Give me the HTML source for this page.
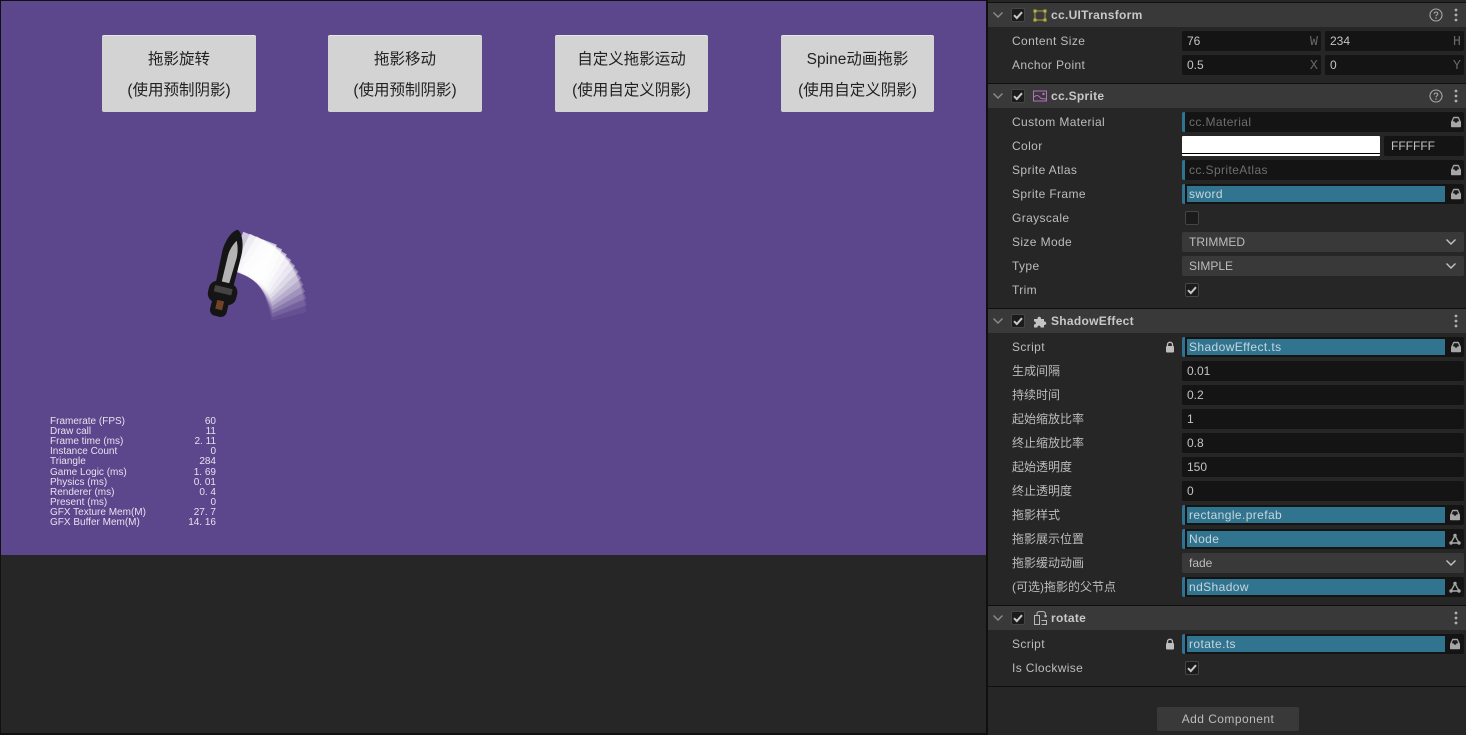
<!DOCTYPE html>
<html><head><meta charset="utf-8"><style>
html,body{margin:0;padding:0;width:1466px;height:735px;overflow:hidden;background:#262626}
body{position:relative;font-family:"Liberation Sans","Noto Sans CJK SC",sans-serif;font-size:12px;color:#bcbcbc}
div,span,svg{position:absolute;box-sizing:border-box;white-space:nowrap}
.btn{top:35px;height:77px;background:#d3d3d3;border-top:1px solid #e6e6e6;border-radius:2px;color:#222;font-size:15.5px;text-align:center}
.btn span{left:0;right:0;line-height:20px}
.btn .a{top:14px}.btn .b{top:45px}
.st{left:50px;font-size:10px;line-height:10px;color:#e6e2ee;white-space:pre}
.sv{left:150px;width:66px;text-align:right;font-size:10px;line-height:10px;color:#e6e2ee;white-space:pre}
.hd{left:988px;width:478px;height:24px;background:#393939}
.sep{left:988px;width:478px;height:1px;background:#0f0f0f}
.t{left:1051px;font-weight:bold;line-height:24px;color:#c8c8c8;font-size:12px;letter-spacing:.3px}
.l{left:1012px;line-height:20px;height:20px;color:#bcbcbc;letter-spacing:.38px}
.z{letter-spacing:0}
.i{height:20px;background:#141414;border-radius:2px;line-height:20px;padding-left:5px;color:#c4c4c4}
.k{width:20px;margin-top:2px;text-align:right;font-family:"Liberation Mono",monospace;color:#686868;line-height:20px;font-size:13.5px}
.f{left:1182px;width:282px;height:20px;background:#141414;border-radius:2px;border-left:3px solid #2f7390;line-height:20px;color:#6e6e6e;padding-left:4px;letter-spacing:.4px}
.fi{left:1187px;width:258px;height:16px;background:#317490;line-height:16px;color:#c6d6dd;padding-left:2px;letter-spacing:.4px}
.s{left:1182px;width:282px;height:20px;background:#393939;border-radius:2px;line-height:20px;padding-left:7px;color:#bcbcbc}
.c{width:14px;height:14px;background:#1b1b1b;border:1px solid #454545;border-radius:2px}
</style></head><body>
<svg width="0" height="0" style="left:0;top:0"><defs>
<symbol id="chev" viewBox="0 0 12 8"><path d="M1.5 1.5 6 6l4.500-4.500" fill="none" stroke="currentColor" stroke-width="1.400"/></symbol>
<symbol id="chk" viewBox="0 0 14 14"><path d="M3 7.200 5.800 10 11 4.200" fill="none" stroke="#c8c8c8" stroke-width="2"/></symbol>
<symbol id="help" viewBox="0 0 14 14"><circle cx="7" cy="7" r="6" fill="none" stroke="#a8a8a8" stroke-width="1.100"/><path d="M5.200 5.600C5.300 3.500 8.800 3.500 8.800 5.500 8.800 6.800 7 6.800 7 8.200" fill="none" stroke="#a8a8a8" stroke-width="1.100"/><circle cx="7" cy="10" r=".8" fill="#a8a8a8"/></symbol>
<symbol id="dots" viewBox="0 0 4 14"><circle cx="2" cy="2" r="1.400" fill="#b0b0b0"/><circle cx="2" cy="7" r="1.400" fill="#b0b0b0"/><circle cx="2" cy="12" r="1.400" fill="#b0b0b0"/></symbol>
<symbol id="box" viewBox="0 0 12 12"><path d="M1 6 3 1.500C3.300 1 3.600.8 4 .8H8C8.400.8 8.700 1 9 1.500L11 6V10.500C11 11 10.700 11.200 10.300 11.200H1.700C1.300 11.200 1 11 1 10.500Z" fill="#a6a6a6"/><path d="M2.800 5.300 4 2.300H8L9.200 5.300H7.600L7 6.600H5L4.400 5.300Z" fill="#1a1a1a"/></symbol>
<symbol id="node" viewBox="0 0 12 12"><path d="M6 2.500 2 10H10Z" fill="none" stroke="#a6a6a6" stroke-width="1.400"/><circle cx="6" cy="2.500" r="1.700" fill="#a6a6a6"/><circle cx="2" cy="10" r="1.700" fill="#a6a6a6"/><circle cx="10" cy="10" r="1.700" fill="#a6a6a6"/></symbol>
<symbol id="lock" viewBox="0 0 10 12"><path d="M2.500 5.500V3.500C2.500.6 7.500.6 7.500 3.500V5.500" fill="none" stroke="#bdbdbd" stroke-width="1.300"/><rect x="1" y="5" width="8" height="6.500" rx="1" fill="#bdbdbd"/></symbol>
</defs></svg>

<div style="left:1px;top:1px;width:985px;height:554px;background:#5c468c"></div>
<div style="left:0;top:0;width:1px;height:735px;background:#111"></div>
<div style="left:0;top:0;width:988px;height:1px;background:#111"></div>
<div style="left:986px;top:0;width:2px;height:735px;background:#0f0f0f"></div>
<div style="left:0;top:733px;width:988px;height:2px;background:#111"></div>

<div class="btn" style="left:102px;width:154px"><span class="a">拖影旋转</span><span class="b">(使用预制阴影)</span></div>
<div class="btn" style="left:328px;width:154px"><span class="a">拖影移动</span><span class="b">(使用预制阴影)</span></div>
<div class="btn" style="left:555px;width:153px"><span class="a">自定义拖影运动</span><span class="b">(使用自定义阴影)</span></div>
<div class="btn" style="left:781px;width:153px"><span class="a">Spine动画拖影</span><span class="b">(使用自定义阴影)</span></div>

<svg style="left:180px;top:215px" width="140" height="115" viewBox="180 215 140 115">
<g fill="#fff">
<rect x="214.100" y="231.200" width="36" height="40" opacity=".7" transform="rotate(21 227 310)"/>
<rect x="214.300" y="231.400" width="35.700" height="39.600" opacity=".65" transform="rotate(26 227 310)"/>
<rect x="214.400" y="231.600" width="35.300" height="39.300" opacity=".6" transform="rotate(31 227 310)"/>
<rect x="214.600" y="231.800" width="35" height="38.900" opacity=".5" transform="rotate(36 227 310)"/>
<rect x="214.800" y="232" width="34.700" height="38.500" opacity=".45" transform="rotate(41 227 310)"/>
<rect x="214.900" y="232.100" width="34.400" height="38.200" opacity=".38" transform="rotate(46 227 310)"/>
<rect x="215.100" y="232.300" width="34" height="37.800" opacity=".3" transform="rotate(51 227 310)"/>
<rect x="215.300" y="232.500" width="33.700" height="37.500" opacity=".25" transform="rotate(56 227 310)"/>
<rect x="215.400" y="232.700" width="33.400" height="37.100" opacity=".2" transform="rotate(61 227 310)"/>
<rect x="215.600" y="232.900" width="33" height="36.700" opacity=".15" transform="rotate(66 227 310)"/>
<rect x="215.800" y="233" width="32.700" height="36.400" opacity=".1" transform="rotate(71 227 310)"/>
<rect x="215.900" y="233.200" width="32.400" height="36" opacity=".06" transform="rotate(76 227 310)"/>
</g>
<g transform="translate(227.500 272.500) rotate(13.500)">
<path d="M0-44C5.500-42 9.500-30 9.500-20L9 16H-9L-10-20C-10-30-5.500-42 0-44Z" fill="#151515"/>
<path d="M1.500-33C4-28 5.500-22 5.500-16L4 13H-3.500L-3.500-16C-3.500-22-1.500-28 1.500-33Z" fill="#b4b4b4"/>
<rect x="-14.500" y="10" width="29" height="22" rx="9" fill="#151515"/>
<rect x="-9" y="15" width="18" height="6.500" rx="1" fill="#444"/>
<rect x="-8.500" y="27" width="17" height="18" rx="6" fill="#151515"/>
<rect x="-3.500" y="29" width="7" height="9" fill="#6e4327"/>
</g>
</svg>

<div class="st" style="top:417px">Framerate (FPS)</div><div class="sv" style="top:417px">60</div>
<div class="st" style="top:427px">Draw call</div><div class="sv" style="top:427px">11</div>
<div class="st" style="top:437px">Frame time (ms)</div><div class="sv" style="top:437px">2. 11</div>
<div class="st" style="top:447px">Instance Count</div><div class="sv" style="top:447px">0</div>
<div class="st" style="top:457px">Triangle</div><div class="sv" style="top:457px">284</div>
<div class="st" style="top:468px">Game Logic (ms)</div><div class="sv" style="top:468px">1. 69</div>
<div class="st" style="top:478px">Physics (ms)</div><div class="sv" style="top:478px">0. 01</div>
<div class="st" style="top:488px">Renderer (ms)</div><div class="sv" style="top:488px">0. 4</div>
<div class="st" style="top:498px">Present (ms)</div><div class="sv" style="top:498px">0</div>
<div class="st" style="top:508px">GFX Texture Mem(M)</div><div class="sv" style="top:508px">27. 7</div>
<div class="st" style="top:518px">GFX Buffer Mem(M)</div><div class="sv" style="top:518px">14. 16</div>

<!-- separators -->
<div class="sep" style="top:2px"></div>
<div class="sep" style="top:83px"></div>
<div class="sep" style="top:308px"></div>
<div class="sep" style="top:605px"></div>
<div class="sep" style="top:686px"></div>

<!-- headers -->
<div class="hd" style="top:3px"></div>
<div class="hd" style="top:84px"></div>
<div class="hd" style="top:309px"></div>
<div class="hd" style="top:606px"></div>

<svg style="left:992px;top:11px;color:#8c8c8c" width="12" height="8"><use href="#chev"/></svg>
<svg style="left:992px;top:92px;color:#8c8c8c" width="12" height="8"><use href="#chev"/></svg>
<svg style="left:992px;top:317px;color:#8c8c8c" width="12" height="8"><use href="#chev"/></svg>
<svg style="left:992px;top:614px;color:#8c8c8c" width="12" height="8"><use href="#chev"/></svg>

<div class="c" style="left:1011px;top:8px"><svg style="left:-1px;top:-1px" width="14" height="14"><use href="#chk"/></svg></div>
<div class="c" style="left:1011px;top:89px"><svg style="left:-1px;top:-1px" width="14" height="14"><use href="#chk"/></svg></div>
<div class="c" style="left:1011px;top:314px"><svg style="left:-1px;top:-1px" width="14" height="14"><use href="#chk"/></svg></div>
<div class="c" style="left:1011px;top:611px"><svg style="left:-1px;top:-1px" width="14" height="14"><use href="#chk"/></svg></div>

<svg style="left:1033px;top:9px" width="14" height="13" viewBox="0 0 14 13"><rect x="2" y="2" width="10" height="9" fill="none" stroke="#a5a53f" stroke-width="1"/><g fill="#b3b345"><rect x=".5" y=".5" width="3" height="3"/><rect x="10.500" y=".5" width="3" height="3"/><rect x=".5" y="9.500" width="3" height="3"/><rect x="10.500" y="9.500" width="3" height="3"/></g></svg>
<svg style="left:1033px;top:90px" width="14" height="12" viewBox="0 0 14 12"><rect x=".5" y="1" width="13" height="10" fill="none" stroke="#b56fc0"/><path d="M1 7C4 4 6 6 8 8.500L13 9" fill="none" stroke="#b56fc0"/><circle cx="10.500" cy="4" r="1.200" fill="#b56fc0"/></svg>
<svg style="left:1033px;top:315px" width="14" height="13" viewBox="0 0 14 13"><path d="M1 4H4.500C4 1 8.500 1 8 4H11V6.500C14 6 14 10.500 11 10V12.500H7.500C8 10 4 10 4.500 12.500H1V9.500C3.500 9.500 3.500 6.500 1 6.500Z" fill="#c4c4c4"/></svg>
<svg style="left:1034px;top:611px" width="13" height="14" viewBox="0 0 13 14"><rect x=".5" y="4.500" width="5" height="9" fill="none" stroke="#b8b8b8"/><path d="M3 4V2.500C3 1 4.500.5 6 .5H8.500C10.500.5 11.500 1.500 11.500 3.500V6M10 4.500 11.500 6 13 4.500" fill="none" stroke="#b8b8b8"/><path d="M7.500 9.500H12.500V13.500H7.500" fill="none" stroke="#b8b8b8"/></svg>

<div class="t" style="top:3px">cc.UITransform</div>
<div class="t" style="top:84px">cc.Sprite</div>
<div class="t" style="top:309px">ShadowEffect</div>
<div class="t" style="top:606px">rotate</div>

<svg style="left:1429px;top:8px" width="14" height="14"><use href="#help"/></svg>
<svg style="left:1429px;top:89px" width="14" height="14"><use href="#help"/></svg>
<svg style="left:1454px;top:8px" width="4" height="14"><use href="#dots"/></svg>
<svg style="left:1454px;top:89px" width="4" height="14"><use href="#dots"/></svg>
<svg style="left:1454px;top:314px" width="4" height="14"><use href="#dots"/></svg>
<svg style="left:1454px;top:611px" width="4" height="14"><use href="#dots"/></svg>

<!-- UITransform -->
<div class="l" style="top:31px">Content Size</div>
<div class="l" style="top:55px">Anchor Point</div>
<div class="i" style="left:1182px;top:31px;width:139px">76</div><div class="k" style="left:1298px;top:31px">W</div>
<div class="i" style="left:1325px;top:31px;width:139px">234</div><div class="k" style="left:1441px;top:31px">H</div>
<div class="i" style="left:1182px;top:55px;width:139px">0.5</div><div class="k" style="left:1298px;top:55px">X</div>
<div class="i" style="left:1325px;top:55px;width:139px">0</div><div class="k" style="left:1441px;top:55px">Y</div>

<!-- Sprite -->
<div class="l" style="top:112px">Custom Material</div>
<div class="l" style="top:136px">Color</div>
<div class="l" style="top:160px">Sprite Atlas</div>
<div class="l" style="top:184px">Sprite Frame</div>
<div class="l" style="top:208px">Grayscale</div>
<div class="l" style="top:232px">Size Mode</div>
<div class="l" style="top:256px">Type</div>
<div class="l" style="top:280px">Trim</div>

<div class="f" style="top:112px">cc.Material</div>
<svg style="left:1450px;top:116px" width="12" height="12"><use href="#box"/></svg>
<div style="left:1182px;top:136px;width:198px;height:20px;background:#fff;border-radius:1px"></div>
<div style="left:1182px;top:153px;width:198px;height:1px;background:#000"></div>
<div class="i" style="left:1384px;top:136px;width:80px;padding-left:7px">FFFFFF</div>
<div class="f" style="top:160px">cc.SpriteAtlas</div>
<svg style="left:1450px;top:164px" width="12" height="12"><use href="#box"/></svg>
<div class="f" style="top:184px"></div><div class="fi" style="top:186px">sword</div>
<svg style="left:1450px;top:188px" width="12" height="12"><use href="#box"/></svg>
<div class="c" style="left:1185px;top:211px"></div>
<div class="s" style="top:232px">TRIMMED</div><svg style="left:1445px;top:238px;color:#c4c4c4" width="12" height="8"><use href="#chev"/></svg>
<div class="s" style="top:256px">SIMPLE</div><svg style="left:1445px;top:262px;color:#c4c4c4" width="12" height="8"><use href="#chev"/></svg>
<div class="c" style="left:1185px;top:283px"><svg style="left:-1px;top:-1px" width="14" height="14"><use href="#chk"/></svg></div>

<!-- ShadowEffect -->
<div class="l" style="top:337px">Script</div>
<svg style="left:1165px;top:341px" width="10" height="12"><use href="#lock"/></svg>
<div class="l z" style="top:361px">生成间隔</div>
<div class="l z" style="top:385px">持续时间</div>
<div class="l z" style="top:409px">起始缩放比率</div>
<div class="l z" style="top:433px">终止缩放比率</div>
<div class="l z" style="top:457px">起始透明度</div>
<div class="l z" style="top:481px">终止透明度</div>
<div class="l z" style="top:505px">拖影样式</div>
<div class="l z" style="top:529px">拖影展示位置</div>
<div class="l z" style="top:553px">拖影缓动动画</div>
<div class="l z" style="top:577px">(可选)拖影的父节点</div>

<div class="f" style="top:337px"></div><div class="fi" style="top:339px">ShadowEffect.ts</div>
<svg style="left:1450px;top:341px" width="12" height="12"><use href="#box"/></svg>
<div class="i" style="left:1182px;top:361px;width:282px">0.01</div>
<div class="i" style="left:1182px;top:385px;width:282px">0.2</div>
<div class="i" style="left:1182px;top:409px;width:282px">1</div>
<div class="i" style="left:1182px;top:433px;width:282px">0.8</div>
<div class="i" style="left:1182px;top:457px;width:282px">150</div>
<div class="i" style="left:1182px;top:481px;width:282px">0</div>
<div class="f" style="top:505px"></div><div class="fi" style="top:507px">rectangle.prefab</div>
<svg style="left:1449px;top:509px" width="12" height="12"><use href="#box"/></svg>
<div class="f" style="top:529px"></div><div class="fi" style="top:531px">Node</div>
<svg style="left:1449px;top:533px" width="12" height="12"><use href="#node"/></svg>
<div class="s" style="top:553px">fade</div><svg style="left:1445px;top:559px;color:#c4c4c4" width="12" height="8"><use href="#chev"/></svg>
<div class="f" style="top:577px"></div><div class="fi" style="top:579px">ndShadow</div>
<svg style="left:1449px;top:581px" width="12" height="12"><use href="#node"/></svg>

<!-- rotate -->
<div class="l" style="top:634px">Script</div>
<svg style="left:1165px;top:638px" width="10" height="12"><use href="#lock"/></svg>
<div class="l" style="top:658px">Is Clockwise</div>
<div class="f" style="top:634px"></div><div class="fi" style="top:636px">rotate.ts</div>
<svg style="left:1449px;top:638px" width="12" height="12"><use href="#box"/></svg>
<div class="c" style="left:1185px;top:661px"><svg style="left:-1px;top:-1px" width="14" height="14"><use href="#chk"/></svg></div>

<div style="left:1157px;top:707px;width:142px;height:24px;background:#393939;border-radius:2px;line-height:24px;text-align:center;color:#bcbcbc;letter-spacing:.45px">Add Component</div>
</body></html>
